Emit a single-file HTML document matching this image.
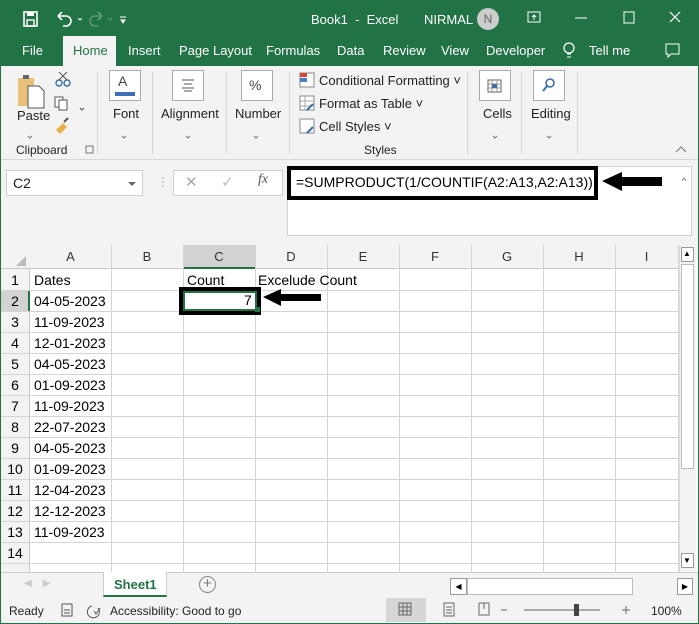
<!DOCTYPE html>
<html><head><style>
*{margin:0;padding:0;box-sizing:border-box}
body{width:699px;height:624px;overflow:hidden;background:#fff;font-family:"Liberation Sans",sans-serif;position:relative}
.a{position:absolute}
.t{color:#fff;font-size:13px;white-space:nowrap}
.r{font-size:12px;color:#222;white-space:nowrap}
.gl{position:absolute;background:#d4d4d4}
.c{position:absolute;font-size:14px;color:#000;white-space:nowrap}
.ib{position:absolute;border:1px solid #aaa;background:#fff}
</style></head><body>
<div class="a" style="left:0;top:0;width:699px;height:66px;background:#217346"></div>
<div class="a" style="left:0;top:0;width:699px;height:624px;border:1px solid #217346;pointer-events:none;z-index:9"></div>
<!-- title bar -->
<svg class="a" style="left:22px;top:10px" width="120" height="20"><rect x="2" y="2" width="13" height="14" fill="none" stroke="#fff" stroke-width="1.6"/><rect x="5" y="2" width="7" height="4" fill="#fff"/><rect x="5" y="10" width="7" height="6" fill="none" stroke="#fff" stroke-width="1.4"/>
<path d="M36 6 h8 a5 5 0 0 1 0 10 h-3 M36 6 l4 -4 M36 6 l4 4" stroke="#fff" stroke-width="1.6" fill="none"/><path d="M56 8 l2 2 l2 -2" stroke="#fff" fill="none"/>
<path d="M80 6 h-7 a5 5 0 0 0 0 10 h3 M80 6 l-4 -4 M80 6 l-4 4" stroke="#5a9a77" stroke-width="1.6" fill="none"/><path d="M86 8 l2 2 l2 -2" stroke="#5a9a77" fill="none"/>
<path d="M98 7 h6 M99 10 l2 3 l2 -3z" stroke="#fff" fill="#fff"/></svg>
<div class="a t" style="left:311px;top:12px">Book1 &nbsp;-&nbsp; Excel</div>
<div class="a t" style="left:424px;top:12px">NIRMAL</div>
<div class="a" style="left:477px;top:8px;width:22px;height:22px;border-radius:50%;background:#ccc;color:#666;font-size:12px;text-align:center;line-height:22px">N</div>
<svg class="a" style="left:525px;top:10px" width="170" height="16"><rect x="3" y="2" width="12" height="10" fill="none" stroke="#fff"/><path d="M9 10 v-5 M7 7 l2-2 l2 2" stroke="#fff" fill="none"/><path d="M50 8 h12" stroke="#fff"/><rect x="99" y="2" width="10" height="11" fill="none" stroke="#fff"/><path d="M145 2 l10 10 M155 2 l-10 10" stroke="#fff" stroke-width="1.2"/></svg>
<!-- tabs -->
<div class="a" style="left:63px;top:36px;width:53px;height:30px;background:#f3f3f3"></div>
<div class="a t" style="left:22px;top:43px">File</div>
<div class="a t" style="left:73px;top:43px;color:#217346">Home</div>
<div class="a t" style="left:128px;top:43px">Insert</div>
<div class="a t" style="left:179px;top:43px">Page Layout</div>
<div class="a t" style="left:266px;top:43px">Formulas</div>
<div class="a t" style="left:337px;top:43px">Data</div>
<div class="a t" style="left:383px;top:43px">Review</div>
<div class="a t" style="left:441px;top:43px">View</div>
<div class="a t" style="left:486px;top:43px">Developer</div>
<svg class="a" style="left:562px;top:41px" width="16" height="20"><circle cx="7" cy="7" r="5" fill="none" stroke="#fff" stroke-width="1.3"/><path d="M5 13 h4 M5 16 h4" stroke="#fff"/></svg>
<div class="a t" style="left:589px;top:43px">Tell me</div>
<svg class="a" style="left:664px;top:42px" width="18" height="18"><path d="M2 2 h13 v10 h-8 l-3 3 v-3 h-2z" fill="none" stroke="#fff"/></svg>
<!-- ribbon -->
<div class="a" style="left:0;top:66px;width:699px;height:94px;background:#f3f3f3;border-bottom:1px solid #d6d6d6"></div>
<svg class="a" style="left:14px;top:72px" width="70" height="70"><rect x="4" y="6" width="16" height="28" fill="#e8c07a"/><rect x="9" y="3" width="6" height="4" fill="#666"/><path d="M14 14 h11 l5 5 v17 h-16z" fill="#fff" stroke="#555"/><circle cx="45" cy="11" r="3" fill="none" stroke="#3a6ea5" stroke-width="1.4"/><circle cx="53" cy="11" r="3" fill="none" stroke="#3a6ea5" stroke-width="1.4"/><path d="M45 8 l8 -8 M53 8 l-8 -8" stroke="#555"/><rect x="41" y="25" width="8" height="10" fill="#fff" stroke="#555"/><rect x="45" y="28" width="8" height="10" fill="#fff" stroke="#555"/><path d="M66 36 l2 2 l2 -2" stroke="#555" fill="none"/><path d="M42 58 l7 -7 l4 4 l-7 7z" fill="#e8b04a"/><path d="M50 50 l4 -4" stroke="#555" stroke-width="2"/></svg>
<div class="a r" style="left:17px;top:108px;font-size:13px">Paste</div>
<div class="a r" style="left:16px;top:143px">Clipboard</div>
<div class="a" style="left:97px;top:72px;width:1px;height:82px;background:#d6d6d6"></div>
<div class="ib" style="left:109px;top:70px;width:32px;height:31px"></div>
<div class="a" style="left:118px;top:73px;font-size:14px;color:#444">A</div>
<div class="a" style="left:115px;top:92px;width:20px;height:4px;background:#3d6fb6"></div>
<div class="a r" style="left:113px;top:106px;font-size:13px">Font</div>
<div class="a" style="left:152px;top:72px;width:1px;height:82px;background:#d6d6d6"></div>
<div class="ib" style="left:172px;top:70px;width:32px;height:31px"></div>
<svg class="a" style="left:180px;top:78px" width="16" height="14"><path d="M2 2 h12 M4 6 h8 M2 10 h12 M4 13 h8" stroke="#555"/></svg>
<div class="a r" style="left:161px;top:106px;font-size:13px">Alignment</div>
<div class="a" style="left:226px;top:72px;width:1px;height:82px;background:#d6d6d6"></div>
<div class="ib" style="left:241px;top:70px;width:32px;height:31px"></div>
<div class="a" style="left:249px;top:77px;font-size:14px;color:#444">%</div>
<div class="a r" style="left:235px;top:106px;font-size:13px">Number</div>
<div class="a" style="left:289px;top:72px;width:1px;height:82px;background:#d6d6d6"></div>
<svg class="a" style="left:299px;top:72px" width="18" height="80"><rect x="1" y="1" width="14" height="14" fill="#fff" stroke="#888"/><rect x="1" y="1" width="7" height="4" fill="#d9453b"/><rect x="1" y="6" width="7" height="4" fill="#4b7bc4"/><rect x="1" y="24" width="14" height="14" fill="#fff" stroke="#888"/><path d="M1 29 h14 M1 34 h14 M6 24 v14" stroke="#aaa"/><path d="M8 38 l6 -6" stroke="#3a6ea5" stroke-width="2"/><rect x="1" y="47" width="14" height="14" fill="#fff" stroke="#888"/><path d="M8 61 l6 -6" stroke="#3a6ea5" stroke-width="2"/></svg>
<div class="a r" style="left:319px;top:73px;font-size:13px">Conditional Formatting ˅</div>
<div class="a r" style="left:319px;top:96px;font-size:13px">Format as Table ˅</div>
<div class="a r" style="left:319px;top:119px;font-size:13px">Cell Styles ˅</div>
<div class="a r" style="left:364px;top:143px">Styles</div>
<div class="a" style="left:467px;top:72px;width:1px;height:82px;background:#d6d6d6"></div>
<div class="ib" style="left:479px;top:70px;width:32px;height:31px"></div>
<svg class="a" style="left:485px;top:76px" width="20" height="18"><rect x="3" y="4" width="13" height="12" fill="none" stroke="#666"/><path d="M3 8 h13 M3 12 h13 M7 4 v12 M12 4 v12" stroke="#999"/><rect x="7" y="8" width="5" height="4" fill="#3a6ea5"/></svg>
<div class="a r" style="left:483px;top:106px;font-size:13px">Cells</div>
<div class="a" style="left:521px;top:72px;width:1px;height:82px;background:#d6d6d6"></div>
<div class="ib" style="left:533px;top:70px;width:32px;height:31px"></div>
<svg class="a" style="left:540px;top:76px" width="18" height="18"><circle cx="10" cy="7" r="4" fill="none" stroke="#3a6ea5" stroke-width="1.6"/><path d="M7 10 l-4 5" stroke="#3a6ea5" stroke-width="2"/></svg>
<div class="a r" style="left:531px;top:106px;font-size:13px">Editing</div>
<div class="a" style="left:577px;top:72px;width:1px;height:82px;background:#d6d6d6"></div>
<svg class="a" style="left:0;top:120px" width="699" height="40"><g stroke="#777" fill="none"><path d="M28 16 l2 2 l2-2 M122 16 l2 2 l2-2 M186 16 l2 2 l2-2 M254 16 l2 2 l2-2 M493 16 l2 2 l2-2 M547 16 l2 2 l2-2"/><path d="M676 32 l5 -5 l5 5"/><rect x="86" y="26" width="7" height="7"/></g></svg>
<!-- formula bar -->
<div class="a" style="left:0;top:160px;width:699px;height:100px;background:#f3f3f3"></div>
<div class="a" style="left:6px;top:170px;width:137px;height:26px;background:#fff;border:1px solid #d0d0d0"></div>
<div class="a r" style="left:13px;top:175px;font-size:14px">C2</div>
<div class="a" style="left:128px;top:182px;border:4px solid transparent;border-top-color:#666"></div>
<div class="a" style="left:157px;top:175px;color:#aaa;font-size:12px">⋮</div>
<div class="a" style="left:173px;top:170px;width:110px;height:26px;background:#fff;border:1px solid #d0d0d0"></div>
<div class="a" style="left:185px;top:173px;color:#aaa;font-size:15px">✕</div>
<div class="a" style="left:221px;top:173px;color:#bbb;font-size:15px">✓</div>
<div class="a" style="left:258px;top:172px;color:#555;font-size:14px;font-style:italic;font-family:'Liberation Serif',serif">fx</div>
<div class="a" style="left:287px;top:166px;width:405px;height:70px;background:#fff;border:1px solid #d0d0d0"></div>
<div class="a" style="left:287px;top:166px;width:311px;height:34px;border:4px solid #000"></div>
<div class="a" style="left:296px;top:174px;font-size:14px;color:#000">=SUMPRODUCT(1/COUNTIF(A2:A13,A2:A13))</div>
<svg class="a" style="left:600px;top:170px" width="65" height="22"><path d="M2 11 l20 -9 v5 h40 v9 h-40 v5z" fill="#000"/></svg>
<div class="a" style="left:682px;top:176px;font-size:9px;color:#555">^</div>
<!-- grid -->
<div class="a" style="left:0;top:245px;width:678px;height:24px;background:#f3f3f3;border-bottom:1px solid #c8c8c8"></div>
<div class="a" style="left:183px;top:245px;width:72px;height:24px;background:#d2d2d2;border-bottom:2px solid #217346"></div>
<div class="a" style="left:0;top:269px;width:30px;height:303px;background:#f3f3f3;border-right:1px solid #c8c8c8"></div>
<div class="a" style="left:0;top:290px;width:30px;height:21px;background:#d2d2d2;border-right:2px solid #217346"></div>
<svg class="a" style="left:14px;top:254px" width="14" height="14"><path d="M12 2 v10 h-10z" fill="#bbb"/></svg>
<div id="g"></div>
<div class="a" style="left:679px;top:245px;width:17px;height:327px;background:#f3f3f3;border-left:1px solid #ddd"></div>
<div class="a" style="left:681px;top:247px;width:13px;height:15px;border:1px solid #999;background:#fff"></div>
<div class="a" style="left:683px;top:249px;font-size:8px">▲</div>
<div class="a" style="left:681px;top:264px;width:13px;height:205px;border:1px solid #bbb;background:#fff"></div>
<div class="a" style="left:681px;top:553px;width:13px;height:15px;border:1px solid #999;background:#fff"></div>
<div class="a" style="left:683px;top:556px;font-size:8px">▼</div>
<!-- selection -->
<div class="a" style="left:179px;top:287px;width:82px;height:28px;border:4px solid #000"></div>
<div class="a" style="left:183px;top:291px;width:74px;height:20px;border:2px solid #217346"></div>
<div class="a" style="left:255px;top:307px;width:5px;height:5px;background:#217346"></div>
<div class="c" style="left:244px;top:292px">7</div>
<svg class="a" style="left:262px;top:287px" width="60" height="20"><path d="M1 10 l18 -8 v5 h40 v7 h-40 v5z" fill="#000"/></svg>
<!-- sheet tabs -->
<div class="a" style="left:0;top:572px;width:699px;height:26px;background:#f3f3f3;border-top:1px solid #ccc"></div>
<div class="a" style="left:24px;top:578px;color:#ccc;font-size:10px">◀ &nbsp; &nbsp;▶</div>
<div class="a" style="left:103px;top:572px;width:64px;height:25px;background:#fff;border-bottom:2px solid #217346;border-left:1px solid #ccc;border-right:1px solid #ccc"></div>
<div class="a" style="left:114px;top:577px;color:#217346;font-weight:bold;font-size:13px">Sheet1</div>
<div class="a" style="left:199px;top:576px;width:17px;height:17px;border:1px solid #888;border-radius:50%;color:#777;text-align:center;line-height:14px;font-size:15px">+</div>
<div class="a" style="left:450px;top:578px;width:17px;height:17px;border:1px solid #999;background:#fff;font-size:8px;text-align:center;line-height:15px">◀</div>
<div class="a" style="left:467px;top:578px;width:166px;height:17px;border:1px solid #bbb;background:#fff"></div>
<div class="a" style="left:677px;top:578px;width:16px;height:17px;border:1px solid #999;background:#fff;font-size:8px;text-align:center;line-height:15px">▶</div>
<!-- status -->
<div class="a" style="left:0;top:598px;width:699px;height:26px;background:#f3f3f3"></div>
<div class="a r" style="left:9px;top:604px">Ready</div>
<svg class="a" style="left:60px;top:601px" width="50" height="18"><rect x="2" y="3" width="10" height="12" fill="none" stroke="#555"/><path d="M4 9 h6 M4 12 h6" stroke="#555"/><path d="M32 5 a6 6 0 1 0 6 2" stroke="#555" fill="none"/><path d="M34 10 l2 3 l4 -6" stroke="#555" fill="none"/></svg>
<div class="a r" style="left:110px;top:604px">Accessibility: Good to go</div>
<div class="a" style="left:386px;top:598px;width:40px;height:24px;background:#d6d6d6"></div>
<svg class="a" style="left:396px;top:601px" width="300" height="18"><g stroke="#666" fill="none"><rect x="3" y="2" width="12" height="12"/><path d="M3 6 h12 M3 10 h12 M7 2 v12 M11 2 v12"/><rect x="48" y="2" width="10" height="13"/><path d="M50 6 h6 M50 9 h6 M50 12 h6"/><path d="M83 2 v12 h10 v-12 h-10 M88 2 v6"/><path d="M105 9 h6 M128 9 h76 M226 9 h8 M230 5 v8"/></g><rect x="178" y="3" width="5" height="12" fill="#444"/></svg>
<div class="a r" style="left:651px;top:604px">100%</div>
<script>
var g=document.getElementById('g'),h='';
var xs=[30,111,183,255,327,399,471,543,615,678];
var cols=['A','B','C','D','E','F','G','H','I'];
for(var i=0;i<9;i++){h+='<div class="c" style="left:'+xs[i]+'px;top:249px;width:'+(xs[i+1]-xs[i])+'px;text-align:center;font-size:13px;color:#333">'+cols[i]+'</div>';}
for(var i=1;i<10;i++){h+='<div class="gl" style="left:'+xs[i]+'px;top:245px;width:1px;height:327px"></div>';}
for(var r=0;r<15;r++){var y=269+21*r;h+='<div class="gl" style="left:0;top:'+(y+21)+'px;width:678px;height:1px"></div>';
if(r<14)h+='<div class="c" style="left:0;top:'+(y+3)+'px;width:30px;text-align:center">'+(r+1)+'</div>';}
var d=['04-05-2023','11-09-2023','12-01-2023','04-05-2023','01-09-2023','11-09-2023','22-07-2023','04-05-2023','01-09-2023','12-04-2023','12-12-2023','11-09-2023'];
h+='<div class="c" style="left:34px;top:272px">Dates</div><div class="c" style="left:187px;top:272px">Count</div><div class="c" style="left:258px;top:272px">Excelude Count</div>';
for(var k=0;k<12;k++)h+='<div class="c" style="left:34px;top:'+(293+21*k)+'px">'+d[k]+'</div>';
g.innerHTML=h;
</script>
</body></html>
